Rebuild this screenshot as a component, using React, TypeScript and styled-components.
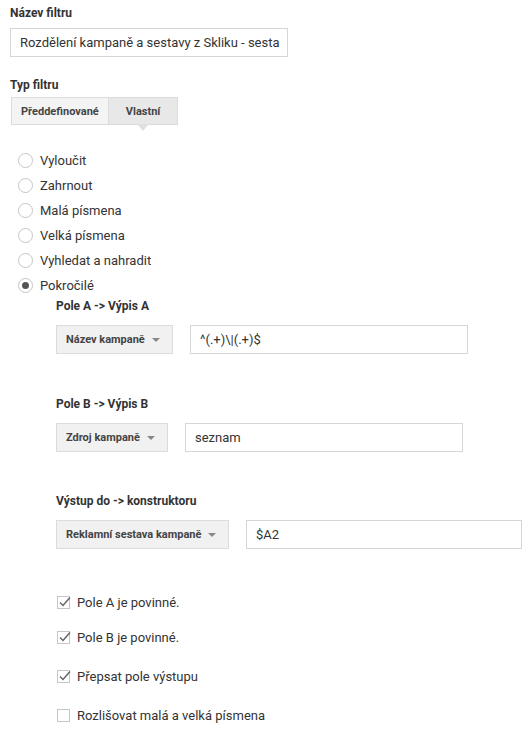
import React from "react";
import styled, { createGlobalStyle } from "styled-components";

const Global = createGlobalStyle`
  html, body { margin: 0; padding: 0; background: #fff; }
  body { font-family: Roboto, "Noto Sans", Arial, sans-serif; color: #222; }
  * { box-sizing: border-box; }
`;

const Page = styled.div`
  padding: 5px 10px 0 10px;
  width: 532px;
  height: 733px;
  overflow: hidden;
`;

const Label = styled.div<{ $mt?: number }>`
  font-size: 12px;
  font-weight: 700;
  color: #333;
  line-height: 16px;
  margin-top: ${(p) => p.$mt ?? 0}px;
`;

const TextInput = styled.div<{ $w: number; $mt?: number }>`
  width: ${(p) => p.$w}px;
  height: 29px;
  border: 1px solid #d6d6d6;
  padding: 0 9px;
  display: flex;
  align-items: center;
  font-size: 13px;
  color: #333;
  white-space: nowrap;
  overflow: hidden;
  margin-top: ${(p) => p.$mt ?? 0}px;
`;

const Toggle = styled.div`
  display: flex;
  margin-top: 4px;
  margin-left: 1px;
`;

const ToggleBtn = styled.div<{ $active?: boolean }>`
  position: relative;
  height: 28px;
  padding: 0 ${(p) => (p.$active ? 17 : 9)}px;
  display: flex;
  align-items: center;
  font-size: 11px;
  font-weight: 700;
  color: #444;
  background: ${(p) => (p.$active ? "#e8e8e8" : "#f4f4f4")};
  border: 1px solid #dcdcdc;
  border-left: ${(p) => (p.$active ? "none" : "1px solid #dcdcdc")};
  ${(p) =>
    p.$active &&
    `
    &::after {
      content: "";
      position: absolute;
      left: 50%;
      bottom: -7px;
      margin-left: -6px;
      border-left: 6px solid transparent;
      border-right: 6px solid transparent;
      border-top: 7px solid #e0e0e0;
    }
  `}
`;

const RadioList = styled.div`
  margin-top: 23px;
  margin-left: 8px;
  display: flex;
  flex-direction: column;
`;

const RadioRow = styled.div`
  display: flex;
  align-items: center;
  height: 25px;
  font-size: 13px;
  color: #333;
`;

const RadioCircle = styled.span<{ $checked?: boolean }>`
  width: 15px;
  height: 15px;
  border-radius: 50%;
  border: 1px solid #c6c6c6;
  margin-right: 7px;
  display: flex;
  align-items: center;
  justify-content: center;
  &::after {
    content: "";
    width: 7px;
    height: 7px;
    border-radius: 50%;
    background: ${(p) => (p.$checked ? "#555" : "transparent")};
  }
`;

const Advanced = styled.div`
  margin-left: 46px;
`;

const FieldRow = styled.div<{ $gap: number }>`
  display: flex;
  gap: ${(p) => p.$gap}px;
  margin-top: 11px;
`;

const Dropdown = styled.div<{ $w: number }>`
  width: ${(p) => p.$w}px;
  height: 29px;
  background: #f1f1f1;
  border: 1px solid #dcdcdc;
  display: flex;
  align-items: center;
  justify-content: space-between;
  padding: 0 9px;
  font-size: 11px;
  font-weight: 700;
  color: #444;
  white-space: nowrap;
`;

const Caret = styled.span`
  width: 0;
  height: 0;
  border-left: 4px solid transparent;
  border-right: 4px solid transparent;
  border-top: 4px solid #888;
  margin-right: 3px;
  flex-shrink: 0;
`;

const CheckList = styled.div`
  margin-top: 43px;
  display: flex;
  flex-direction: column;
`;

const CheckRow = styled.div<{ $mt: number }>`
  display: flex;
  align-items: center;
  height: 20px;
  font-size: 13px;
  color: #333;
  margin-left: 1px;
  margin-top: ${(p) => p.$mt}px;
`;

const Box = styled.span`
  width: 13px;
  height: 13px;
  border: 1px solid #c6c6c6;
  margin-right: 7px;
  position: relative;
  display: inline-block;
`;

const Check = () => (
  <svg width="14" height="12" viewBox="0 0 14 12" style={{ position: "absolute", left: 0, top: -1 }}>
    <path d="M2 6.5 L5 9.5 L12 1.5" fill="none" stroke="#666" strokeWidth="1.5" />
  </svg>
);

const radios = ["Vyloučit", "Zahrnout", "Malá písmena", "Velká písmena", "Vyhledat a nahradit", "Pokročilé"];

export default function App() {
  return (
    <Page>
      <Global />
      <Label>Název filtru</Label>
      <TextInput $w={278} $mt={7}>Rozdělení kampaně a sestavy z Skliku - sesta</TextInput>
      <Label $mt={20}>Typ filtru</Label>
      <Toggle>
        <ToggleBtn>Předdefinované</ToggleBtn>
        <ToggleBtn $active>Vlastní</ToggleBtn>
      </Toggle>
      <RadioList>
        {radios.map((r, i) => (
          <RadioRow key={r}>
            <RadioCircle $checked={i === radios.length - 1} />
            {r}
          </RadioRow>
        ))}
      </RadioList>
      <Advanced>
        <Label $mt={0}>Pole A -&gt; Výpis A</Label>
        <FieldRow $gap={17}>
          <Dropdown $w={117}>Název kampaně<Caret /></Dropdown>
          <TextInput $w={278}>^(.+)\|(.+)$</TextInput>
        </FieldRow>
        <Label $mt={42}>Pole B -&gt; Výpis B</Label>
        <FieldRow $gap={17}>
          <Dropdown $w={112}>Zdroj kampaně<Caret /></Dropdown>
          <TextInput $w={278}>seznam</TextInput>
        </FieldRow>
        <Label $mt={41}>Výstup do -&gt; konstruktoru</Label>
        <FieldRow $gap={17}>
          <Dropdown $w={174}>Reklamní sestava kampaně<Caret /></Dropdown>
          <TextInput $w={278}>$A2</TextInput>
        </FieldRow>
        <CheckList>
          <CheckRow $mt={0}><Box><Check /></Box>Pole A je povinné.</CheckRow>
          <CheckRow $mt={15}><Box><Check /></Box>Pole B je povinné.</CheckRow>
          <CheckRow $mt={19}><Box><Check /></Box>Přepsat pole výstupu</CheckRow>
          <CheckRow $mt={19}><Box />Rozlišovat malá a velká písmena</CheckRow>
        </CheckList>
      </Advanced>
    </Page>
  );
}
